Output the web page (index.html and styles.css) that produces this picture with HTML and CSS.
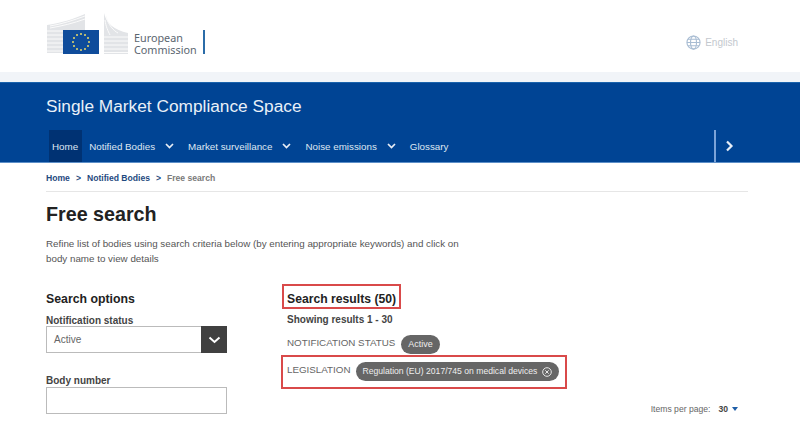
FILE: index.html
```html
<!DOCTYPE html>
<html lang="en">
<head>
<meta charset="utf-8">
<title>Free search</title>
<link rel="stylesheet" href="styles.css">
</head>
<body>
<header class="top">
  <div class="logo">
    <svg class="logo-mark" width="82" height="44" viewBox="0 0 82 44" aria-hidden="true">
      <g fill="#e2e4e7">
        <path d="M1 12 C14 10 28 6 39 1 L39 17 L17 17 L17 40 L1 40 Z"/>
        <path d="M58 0 C60 10 68 17 82 20 L82 41 L58 41 Z"/>
      </g>
      <g fill="none" stroke="#fbfbfb" stroke-width="1">
        <path d="M1 18H17M1 22H17M1 26H17M1 30H17M1 34H17M1 38H17M58 24H82M58 28H82M58 32H82M58 36H82M58 39.500H82"/>
        <path d="M4 15C16 13 28 10 39 6M4 13C16 11 28 7 39 3M60 3C62 12 68 18 72 20M59 7C60 14 62 18 64 22"/>
      </g>
      <rect x="17" y="17" width="36" height="24" fill="#0f4c9b"/>
      <g fill="#e8d868">
        <circle cx="35" cy="21" r="1"/><circle cx="39" cy="22" r="1"/><circle cx="42" cy="25" r="1"/><circle cx="43" cy="29" r="1"/><circle cx="42" cy="33" r="1"/><circle cx="39" cy="36" r="1"/><circle cx="35" cy="37" r="1"/><circle cx="31" cy="36" r="1"/><circle cx="28" cy="33" r="1"/><circle cx="27" cy="29" r="1"/><circle cx="28" cy="25" r="1"/><circle cx="31" cy="22" r="1"/>
      </g>
    </svg>
    <div class="logo-text"><span>European</span><span>Commission</span></div>
    <span class="logo-bar"></span>
  </div>
  <div class="lang">
    <svg width="15" height="15" viewBox="0 0 16 16" fill="none" stroke="#a9bdd3" stroke-width="1.200" aria-hidden="true">
      <circle cx="8" cy="8" r="7"/><ellipse cx="8" cy="8" rx="3.200" ry="7"/><path d="M1 8H15M2 4.500H14M2 11.500H14"/>
    </svg>
    <span>English</span>
  </div>
</header>
<div class="strip"></div>
<section class="banner">
  <h2 class="site-title">Single Market Compliance Space</h2>
  <nav class="nav">
    <a class="nav-item nav-active">Home</a>
    <a class="nav-item">Notified Bodies<svg class="chev" width="9" height="6" viewBox="0 0 9 6" aria-hidden="true"><path d="M1 1L4.500 4.500L8 1" fill="none" stroke="#e8eef6" stroke-width="1.700"/></svg></a>
    <a class="nav-item">Market surveillance<svg class="chev" width="9" height="6" viewBox="0 0 9 6" aria-hidden="true"><path d="M1 1L4.500 4.500L8 1" fill="none" stroke="#e8eef6" stroke-width="1.700"/></svg></a>
    <a class="nav-item">Noise emissions<svg class="chev" width="9" height="6" viewBox="0 0 9 6" aria-hidden="true"><path d="M1 1L4.500 4.500L8 1" fill="none" stroke="#e8eef6" stroke-width="1.700"/></svg></a>
    <a class="nav-item">Glossary</a>
    <div class="nav-next">
      <svg width="9" height="12" viewBox="0 0 9 12" aria-hidden="true"><path d="M2 1.500L6.500 6L2 10.500" fill="none" stroke="#e6edf6" stroke-width="2.200"/></svg>
    </div>
  </nav>
</section>
<main class="content">
  <div class="crumbs"><a>Home</a><i>&gt;</i><a>Notified Bodies</a><i>&gt;</i><span>Free search</span></div>
  <h1 class="page-title">Free search</h1>
  <p class="intro">Refine list of bodies using search criteria below (by entering appropriate keywords) and click on body name to view details</p>
  <div class="columns">
    <aside class="options">
      <h3 class="options-title">Search options</h3>
      <label class="field-label">Notification status</label>
      <div class="select"><span>Active</span><b><svg width="13" height="8" viewBox="0 0 13 8" aria-hidden="true"><path d="M1.500 1.500L6.500 6L11.500 1.500" fill="none" stroke="#fff" stroke-width="2"/></svg></b></div>
      <label class="field-label field-gap">Body number</label>
      <div class="input"></div>
    </aside>
    <section class="results">
      <h3 class="results-title">Search results (50)</h3>
      <p class="showing">Showing results 1 - 30</p>
      <div class="filter"><span>NOTIFICATION STATUS</span><em class="pill">Active</em></div>
      <div class="filter filter-marked"><span>LEGISLATION</span><em class="pill pill-wide">Regulation (EU) 2017/745 on medical devices<svg width="10" height="10" viewBox="0 0 10 10" fill="none" stroke="#e8e8e8" aria-hidden="true"><circle cx="5" cy="5" r="4.300"/><path d="M3.300 3.300L6.700 6.700M6.700 3.300L3.300 6.700"/></svg></em></div>
      <div class="per-page">Items per page:<strong>30</strong><u></u></div>
    </section>
  </div>
</main>
</body>
</html>
```
FILE: styles.css
```css
* { box-sizing: border-box; }
html, body { margin: 0; height: 422px; overflow: hidden; }
body { background: #fff; font-family: "Liberation Sans", Arial, sans-serif; color: #404040; }

.top { height: 72px; padding: 13px 62px 0 46px; display: flex; justify-content: space-between; align-items: flex-start; }
.logo { display: flex; align-items: flex-end; height: 44px; }
.logo-mark { display: block; }
.logo-text { display: flex; flex-direction: column; margin-left: 6px; font: 10.800px/12px "Noto Sans", sans-serif; color: #5b6670; padding-bottom: 1px; }
.logo-bar { width: 2px; height: 24px; margin: 0 0 3px 6px; background: #2b6ca8; }
.lang { display: flex; align-items: center; gap: 4px; margin-top: 22px; font-size: 10px; color: #c3c8ce; }
.lang svg { display: block; }

.strip { height: 10px; background: #f1f4f8; }
.banner { height: 81px; background: #004494; border-top: 1px solid #1a63ac; border-bottom: 1px solid #5d8fc8; padding: 0 0 0 46px; display: flex; flex-direction: column; justify-content: space-between; }
.site-title { margin: 13px 0 0; font-size: 17.300px; line-height: 20px; font-weight: 400; color: #e9f0f8; }
.nav { display: flex; align-items: stretch; height: 32px; padding-left: 3px; font-size: 9.800px; color: #dfe7f2; }
.nav-item { display: flex; align-items: center; padding-right: 14px; }
.nav-active { background: #003273; padding: 0 4px 0 3px; margin-right: 7px; }
.chev { margin-left: 10px; }
.nav-next { margin-left: auto; margin-right: 56px; width: 30px; padding-left: 9px; display: flex; align-items: center; border-left: 2px solid #7ba3d8; }

.content { padding: 0 52px 0 46px; }
.crumbs { height: 29px; border-bottom: 1px solid #e6e6e6; display: flex; align-items: center; gap: 6px; padding-top: 1px; font-size: 8.600px; font-weight: 700; color: #7a7a7a; }
.crumbs a { color: #1f4a80; }
.crumbs i { font-style: normal; color: #1f4a80; }
.page-title { margin: 11px 0 0; font-size: 19.700px; line-height: 22px; color: #222; }
.intro { width: 420px; margin: 11px 0 0; font-size: 9.800px; line-height: 15px; color: #555; }

.columns { display: flex; margin-top: 18px; }
.options { width: 181px; flex: none; margin-right: 60px; }
.options-title { margin: 8px 0 0; font-size: 12.300px; line-height: 14px; color: #222; }
.field-label { display: block; font-size: 10px; line-height: 10px; font-weight: 700; color: #444; margin-top: 10px; }
.field-gap { margin-top: 23px; }
.select, .input { height: 27px; border: 1px solid #bbb; }
.select { display: flex; justify-content: space-between; color: #666; font-size: 10px; }
.input { margin-top: 1px; }
.select span { padding: 7px 0 0 7px; }
.select b { width: 26px; margin: -1px -1px -1px 0; background: #404040; display: flex; align-items: center; justify-content: center; }

.results { flex: 1; position: relative; }
.results-title { display: inline-block; margin: 0 0 0 -5px; padding: 6px 3px 1px 3px; border: 2px solid #d94a4a; font-size: 12.200px; line-height: 14px; color: #222; }
.showing { margin: 5px 0 0; font-size: 10px; line-height: 12px; font-weight: 700; color: #444; }
.filter { display: flex; align-items: flex-start; margin-top: 9px; font-size: 9.800px; color: #666; }
.filter span { margin-top: 2px; }
.pill { margin-left: 6px; height: 19px; padding: 0 7px; border-radius: 10px; background: #666; color: #eee; font: normal 9px/19px "Liberation Sans", sans-serif; display: flex; align-items: center; white-space: nowrap; }
.filter-marked { width: 286px; margin: 1px 0 0 -6px; height: 34px; padding: 5px 0 0 4px; border: 2px solid #d94a4a; }
.pill-wide { margin-left: 5px; gap: 5px; font-size: 8.600px; }
.per-page { position: absolute; top: 120px; right: 10px; display: flex; align-items: center; font-size: 8.600px; color: #666; }
.per-page strong { margin-left: 8px; color: #444; }
.per-page u { margin-left: 4px; border: 3px solid transparent; border-top: 4px solid #1f5fa8; border-bottom: 0; }
```
